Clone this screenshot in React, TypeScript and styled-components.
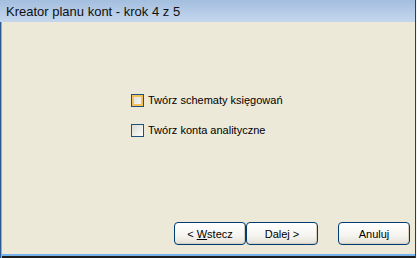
import React from 'react';
import styled, { createGlobalStyle } from 'styled-components';

const GlobalStyle = createGlobalStyle`
  html, body {
    margin: 0;
    padding: 0;
    background: #ece9d8;
  }
  body {
    font-family: "Liberation Sans", Arial, sans-serif;
  }
`;

const Window = styled.div`
  position: relative;
  width: 417px;
  height: 258px;
  box-sizing: border-box;
  display: flex;
  flex-direction: column;
  background: #ece9d8;
  box-shadow:
    inset 1px 0 #2a5a94,
    inset 2px 0 #7db2e6,
    inset -1px 0 #f4f4f4,
    inset -2px 0 #3a3a3a,
    inset 0 -2px #1e1e1e,
    inset 0 -4px #78b4ea;
`;

const TitleBar = styled.div`
  height: 22px;
  display: flex;
  align-items: center;
  padding-left: 6px;
  margin-right: 2px;
  background: linear-gradient(#a4bedf, #c4d7ee);
  color: #101010;
  font-size: 13px;
`;

const Body = styled.div`
  flex: 1;
  display: flex;
  flex-direction: column;
  padding: 71px 0 13px 0;
`;

const Options = styled.div`
  display: flex;
  flex-direction: column;
  gap: 16px;
  padding-left: 131px;
`;

const Option = styled.label`
  display: flex;
  align-items: center;
  gap: 4px;
  height: 14px;
  font-size: 11px;
  color: #000;
`;

const Box = styled.span<{ $hot?: boolean }>`
  width: 13px;
  height: 13px;
  box-sizing: border-box;
  border: 1px solid #1c5180;
  background: linear-gradient(135deg, #dcdcd6, #fbfbf9);
  box-shadow: ${(p) => (p.$hot ? 'inset 0 0 0 2px #f5c25a' : 'none')};
`;

const Footer = styled.div`
  margin-top: auto;
  display: flex;
  padding-left: 174px;
`;

const Button = styled.button<{ $gap?: number }>`
  width: 72px;
  height: 23px;
  margin-left: ${(p) => p.$gap ?? 0}px;
  padding: 0;
  box-sizing: border-box;
  border: 1px solid #003c74;
  border-radius: 4px;
  background: linear-gradient(#ffffff 0%, #f5f4ef 60%, #e3e0d6 100%);
  box-shadow: inset -1px -1px #d6d0c2;
  font-family: "Liberation Sans", Arial, sans-serif;
  font-size: 11px;
  color: #000;
  u {
    text-decoration: underline;
  }
`;

export default function App(): React.ReactElement {
  return (
    <>
      <GlobalStyle />
      <Window>
        <TitleBar>Kreator planu kont - krok 4 z 5</TitleBar>
        <Body>
          <Options>
            <Option>
              <Box $hot />
              Twórz schematy księgowań
            </Option>
            <Option>
              <Box />
              Twórz konta analityczne
            </Option>
          </Options>
          <Footer>
            <Button>&lt; <u>W</u>stecz</Button>
            <Button>Dalej &gt;</Button>
            <Button $gap={20}>Anuluj</Button>
          </Footer>
        </Body>
      </Window>
    </>
  );
}
